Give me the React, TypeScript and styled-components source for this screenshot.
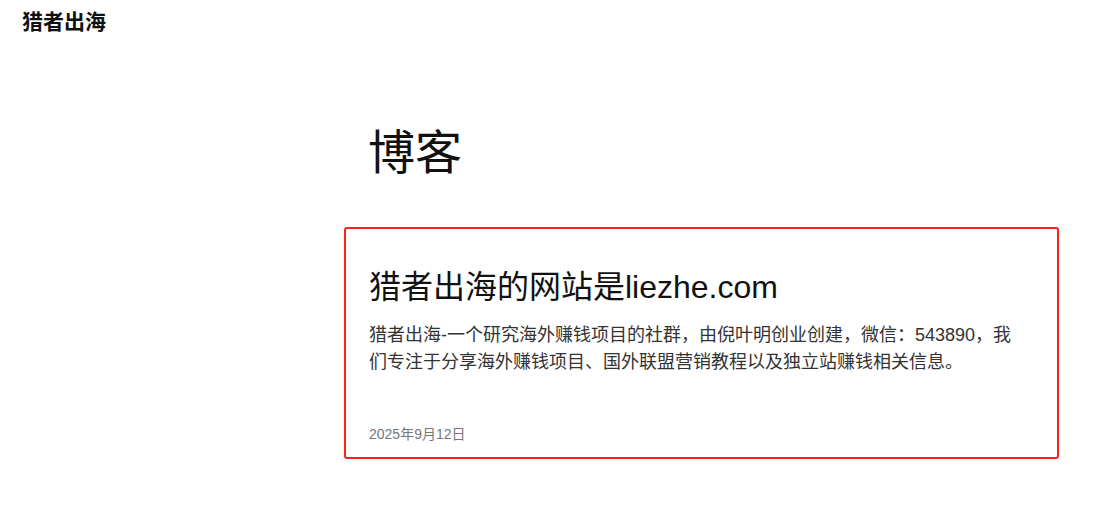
import React from "react";
import styled, { createGlobalStyle } from "styled-components";

const GlobalStyle = createGlobalStyle`
  html, body {
    margin: 0;
    padding: 0;
    background: #ffffff;
  }
  body {
    font-family: "Liberation Sans", "Noto Sans CJK SC", sans-serif;
    color: #111111;
  }
  * { box-sizing: border-box; }
`;

const Page = styled.div`
  width: 1113px;
  min-height: 509px;
  display: flex;
  flex-direction: column;
`;

const Header = styled.header`
  height: 40px;
  padding: 0 22px;
  display: flex;
  align-items: center;
`;

const Brand = styled.a`
  font-family: "Noto Sans CJK SC", sans-serif;
  font-size: 21px;
  font-weight: 700;
  color: #111111;
  text-decoration: none;
`;

const Layout = styled.div`
  display: grid;
  grid-template-columns: 320px 715px;
  column-gap: 24px;
`;

const Side = styled.aside``;

const Main = styled.main`
  display: flex;
  flex-direction: column;
  padding-top: 80px;
`;

const PageTitle = styled.h1`
  margin: 0 0 49px 24px;
  font-family: "Noto Sans CJK SC", sans-serif;
  font-size: 47px;
  font-weight: 400;
  line-height: 58px;
  color: #111111;
`;

const Card = styled.article`
  border: 2px solid #ff2020;
  border-radius: 3px;
  padding: 39px 24px 12px 23px;
  display: flex;
  flex-direction: column;
`;

const PostTitle = styled.h2`
  margin: 0 0 16px;
  font-size: 32px;
  font-weight: 400;
  line-height: 38px;
  color: #111111;
`;

const Excerpt = styled.p`
  margin: 0;
  max-width: 652px;
  font-size: 18px;
  line-height: 27px;
  color: #333333;
`;

const PostDate = styled.time`
  margin-top: 48px;
  font-size: 14px;
  line-height: 21px;
  color: #777777;
`;

export default function App() {
  return (
    <Page>
      <GlobalStyle />
      <Header>
        <Brand href="#">猎者出海</Brand>
      </Header>
      <Layout>
        <Side />
        <Main>
          <PageTitle>博客</PageTitle>
          <Card>
            <PostTitle>猎者出海的网站是liezhe.com</PostTitle>
            <Excerpt>
              猎者出海-一个研究海外赚钱项目的社群，由倪叶明创业创建，微信：543890，我们专注于分享海外赚钱项目、国外联盟营销教程以及独立站赚钱相关信息。
            </Excerpt>
            <PostDate>2025年9月12日</PostDate>
          </Card>
        </Main>
      </Layout>
    </Page>
  );
}
